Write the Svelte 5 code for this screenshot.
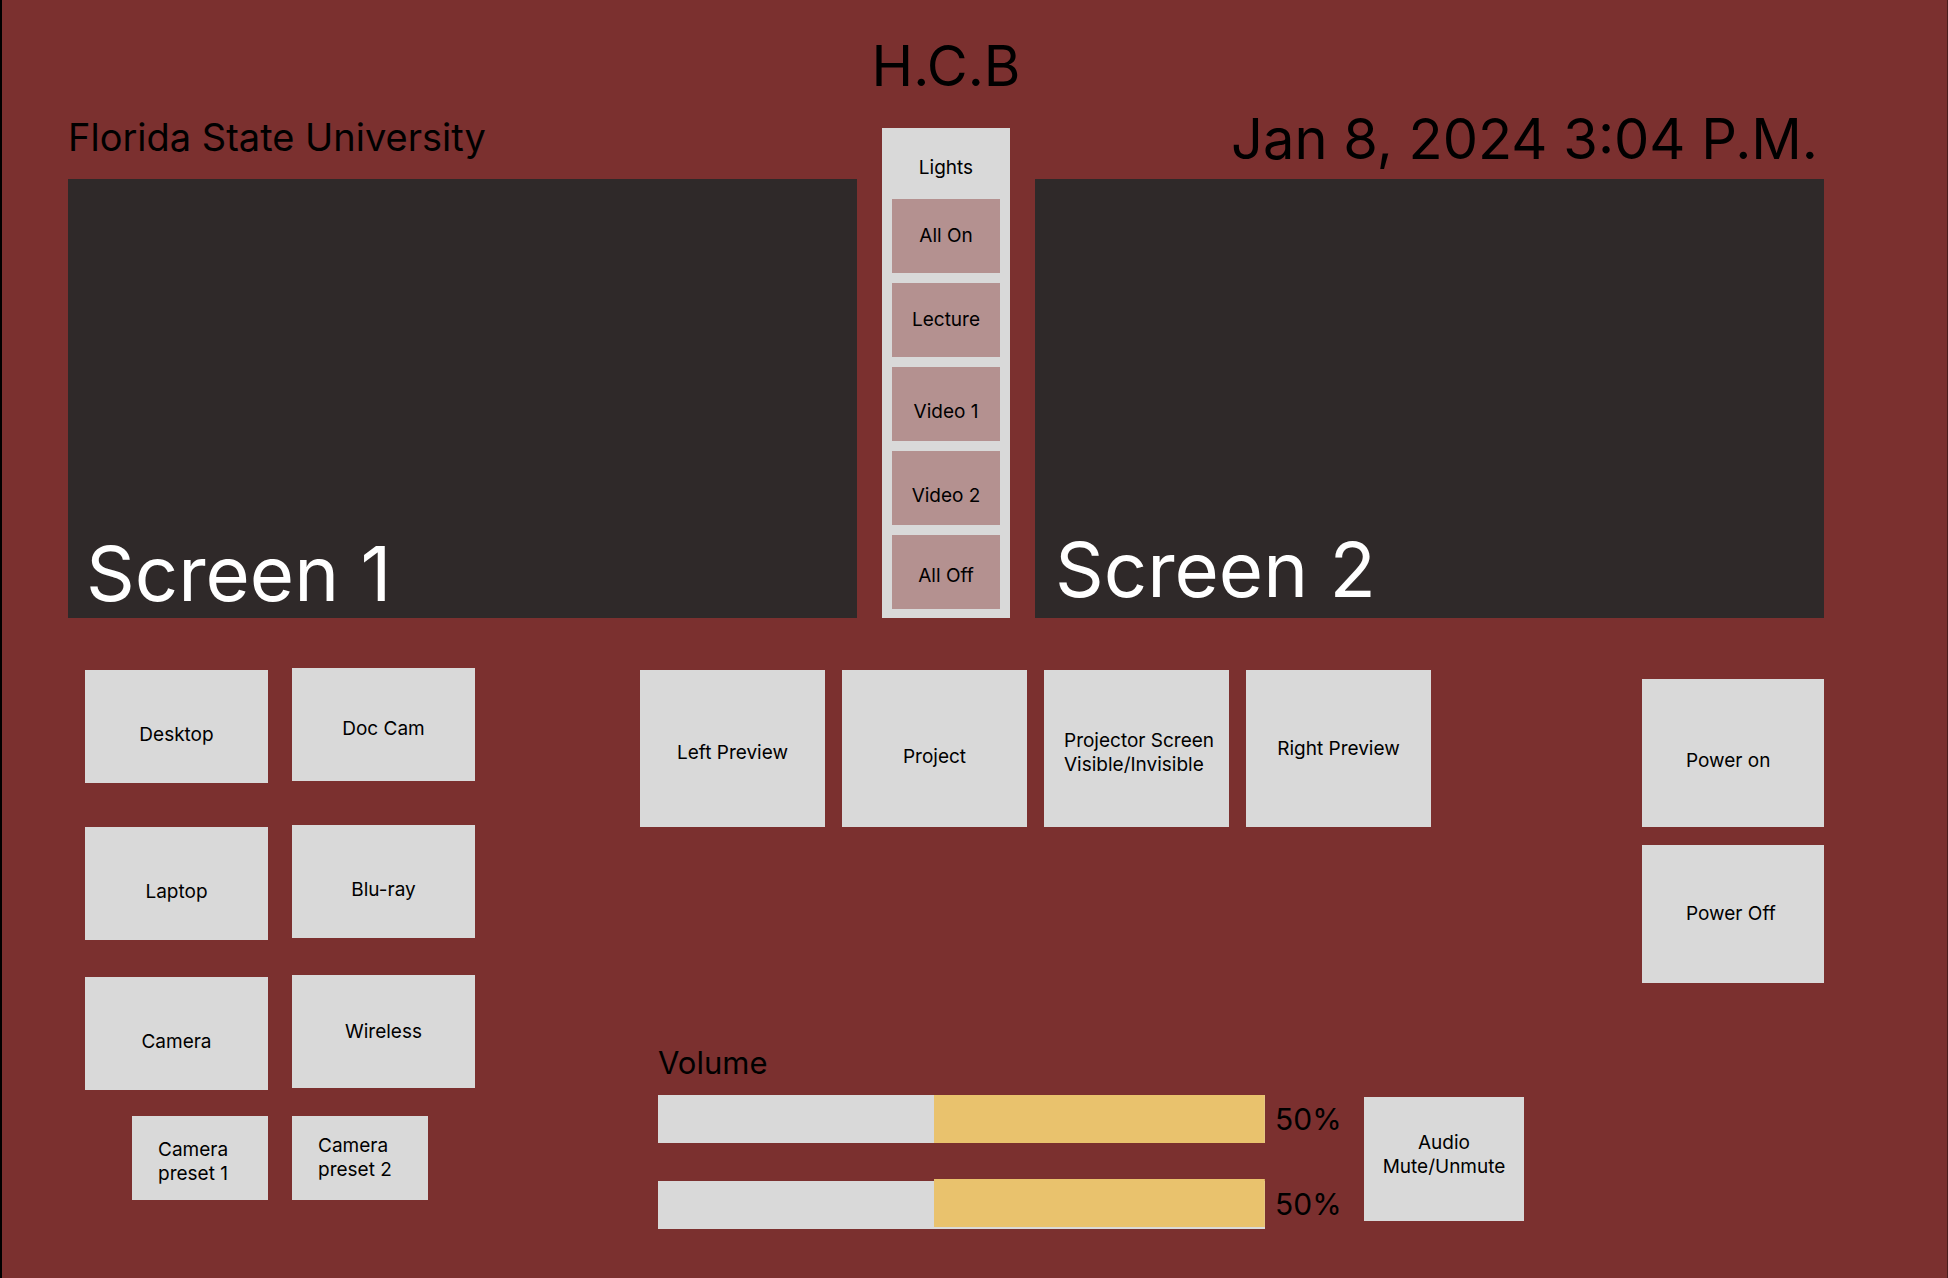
<script>
  const lights = [
    { label: 'All On' },
    { label: 'Lecture' },
    { label: 'Video 1', drop: 'low' },
    { label: 'Video 2', drop: 'low' },
    { label: 'All Off', drop: 'mid' },
  ];

  const sourceColumns = [
    [
      { label: 'Desktop', drop: 'low' },
      { label: 'Laptop', drop: 'low' },
      { label: 'Camera', drop: 'low' },
    ],
    [
      { label: 'Doc Cam', drop: 'mid' },
      { label: 'Blu-ray', drop: 'low' },
      { label: 'Wireless' },
    ],
  ];

  const previews = [
    { label: 'Left Preview', drop: 'mid' },
    { label: 'Project', drop: 'low' },
    { label: 'Projector Screen\nVisible/Invisible', drop: 'mid' },
    { label: 'Right Preview' },
  ];

  let channels = $state([
    { name: 'Volume channel 1', level: 50, split: 54.5 },
    { name: 'Volume channel 2', level: 50, split: 54.5 },
  ]);
</script>

<main class="panel">
  <section class="top">
    <div class="column">
      <h2 class="school">Florida State University</h2>
      <div class="screen">Screen 1</div>
    </div>

    <div class="column middle">
      <h1 class="room">H.C.B</h1>
      <div class="lights" role="group" aria-labelledby="lights-title">
        <h3 id="lights-title">Lights</h3>
        {#each lights as light}
          <button class="light {light.drop ?? ''}">{light.label}</button>
        {/each}
      </div>
    </div>

    <div class="column">
      <time class="clock" datetime="2024-01-08T15:04">Jan 8, 2024 3:04 P.M.</time>
      <div class="screen raised">Screen 2</div>
    </div>
  </section>

  <section class="bottom">
    <div class="sources">
      {#each sourceColumns as column}
        <div class="source-column">
          {#each column as source}
            <button class="tile source {source.drop ?? ''}">{source.label}</button>
          {/each}
        </div>
      {/each}
      <button class="tile preset first mid">Camera{'\n'}preset 1</button>
      <button class="tile preset">Camera{'\n'}preset 2</button>
    </div>

    <div class="center">
      <div class="previews">
        {#each previews as preview}
          <button class="tile preview {preview.drop ?? ''}">{preview.label}</button>
        {/each}
      </div>

      <div class="audio">
        <div class="volume">
          <h3 class="volume-title">Volume</h3>
          {#each channels as channel, i}
            <div class="channel">
              <input
                id="channel-{i}"
                class="slider"
                type="range"
                min="0"
                max="100"
                aria-label={channel.name}
                bind:value={channel.level}
                style="--split: {channel.split + channel.level - 50}%"
              />
              <output for="channel-{i}">{channel.level}%</output>
            </div>
          {/each}
        </div>
        <button class="tile mute">Audio{'\n'}Mute/Unmute</button>
      </div>
    </div>

    <div class="power">
      <button class="tile on low">Power on</button>
      <button class="tile off">Power Off</button>
    </div>
  </section>
</main>

<style>
  :global(body) {
    background: #7b302f;
  }

  .panel {
    box-sizing: border-box;
    min-height: 100vh;
    padding: 30px 123px 40px 66px;
    border-left: 2px solid #000;
    border-right: 1px solid #4a1f1e;
    background: #7b302f;
    color: #000;
    font-family: Inter, 'Liberation Sans', sans-serif;
    font-size: 19px;
    line-height: 24px;
  }

  h1,
  h2,
  h3 {
    margin: 0;
    font-weight: 400;
  }

  button {
    margin: 0;
    padding: 0;
    border: 0;
    border-radius: 0;
    color: inherit;
    font: inherit;
    white-space: pre-line;
    cursor: pointer;
  }

  .mid {
    padding-top: 8px;
  }

  .low {
    padding-top: 16px;
  }

  .top {
    display: grid;
    grid-template-columns: minmax(0, 1fr) 128px minmax(0, 1fr);
    column-gap: 25px;
    align-items: end;
  }

  .column {
    display: flex;
    flex-direction: column;
  }

  .middle {
    align-items: center;
  }

  .school {
    margin-bottom: 18px;
    font-size: 38px;
    line-height: 48px;
  }

  .room {
    margin-bottom: 26px;
    font-size: 56px;
    line-height: 72px;
    white-space: nowrap;
  }

  .clock {
    margin-right: 6px;
    margin-bottom: 4px;
    font-size: 56px;
    line-height: 72px;
    text-align: right;
    white-space: nowrap;
  }

  .screen {
    display: flex;
    align-items: flex-end;
    box-sizing: border-box;
    aspect-ratio: 789 / 439;
    padding: 0 18px;
    background: #2f2929;
    color: #fff;
    font-size: 76px;
    line-height: 90px;
  }

  .raised {
    padding-bottom: 4px;
    padding-left: 20px;
  }

  .lights {
    display: flex;
    flex-direction: column;
    gap: 10px;
    box-sizing: border-box;
    width: 100%;
    padding: 28px 10px 9px;
    background: #d9d9d9;
    text-align: center;
  }

  .lights h3 {
    margin-bottom: 9px;
    font-size: 19px;
    line-height: 24px;
  }

  .light {
    box-sizing: border-box;
    height: 74px;
    background: #b49190;
  }

  .bottom {
    display: grid;
    grid-template-columns: 390px minmax(0, 1fr) 182px;
    align-items: start;
    padding: 50px 0 0 17px;
  }

  .tile {
    box-sizing: border-box;
    background: #d9d9d9;
  }

  .sources {
    display: grid;
    grid-template-columns: 183px 183px;
    gap: 26px 24px;
  }

  .source-column {
    display: grid;
    grid-template-rows: 157px 150px 113px;
    align-items: start;
  }

  .source-column:first-child {
    padding-top: 2px;
  }

  .source {
    height: 113px;
  }

  .preset {
    width: 136px;
    height: 84px;
    padding-left: 26px;
    text-align: left;
  }

  .preset.first {
    justify-self: end;
  }

  .center {
    padding: 2px 118px 0 165px;
  }

  .previews {
    display: grid;
    grid-template-columns: repeat(4, minmax(0, 1fr));
    gap: 17px;
    margin-right: 93px;
  }

  .preview {
    height: 157px;
  }

  .preview:nth-child(3) {
    padding-left: 20px;
    text-align: left;
  }

  .audio {
    display: flex;
    align-items: flex-end;
    gap: 26px;
    margin-top: 216px;
    padding-left: 18px;
  }

  .volume {
    display: flex;
    flex: 1;
    flex-direction: column;
    gap: 36px;
  }

  .volume-title {
    margin-bottom: -24px;
    font-size: 31px;
    line-height: 40px;
  }

  .channel {
    display: flex;
    align-items: center;
    gap: 10px;
  }

  .slider {
    flex: 1;
    min-width: 0;
    height: 48px;
    margin: 0;
    appearance: none;
    background:
      linear-gradient(#e9c26d, #e9c26d) right top / var(--split) 48px no-repeat,
      linear-gradient(#d9d9d9, #d9d9d9) left bottom / 100% 48px no-repeat;
    cursor: pointer;
  }

  .channel:last-child .slider {
    height: 50px;
  }

  .slider::-webkit-slider-thumb {
    width: 1px;
    height: 48px;
    appearance: none;
    background: transparent;
  }

  output {
    width: 63px;
    font-size: 30px;
    line-height: 40px;
  }

  .mute {
    width: 160px;
    height: 124px;
    margin-bottom: 8px;
    padding-bottom: 8px;
  }

  .power {
    display: grid;
    gap: 18px;
    padding-top: 11px;
  }

  .power .tile {
    padding-left: 44px;
    text-align: left;
  }

  .on {
    height: 148px;
  }

  .off {
    height: 138px;
  }
</style>
